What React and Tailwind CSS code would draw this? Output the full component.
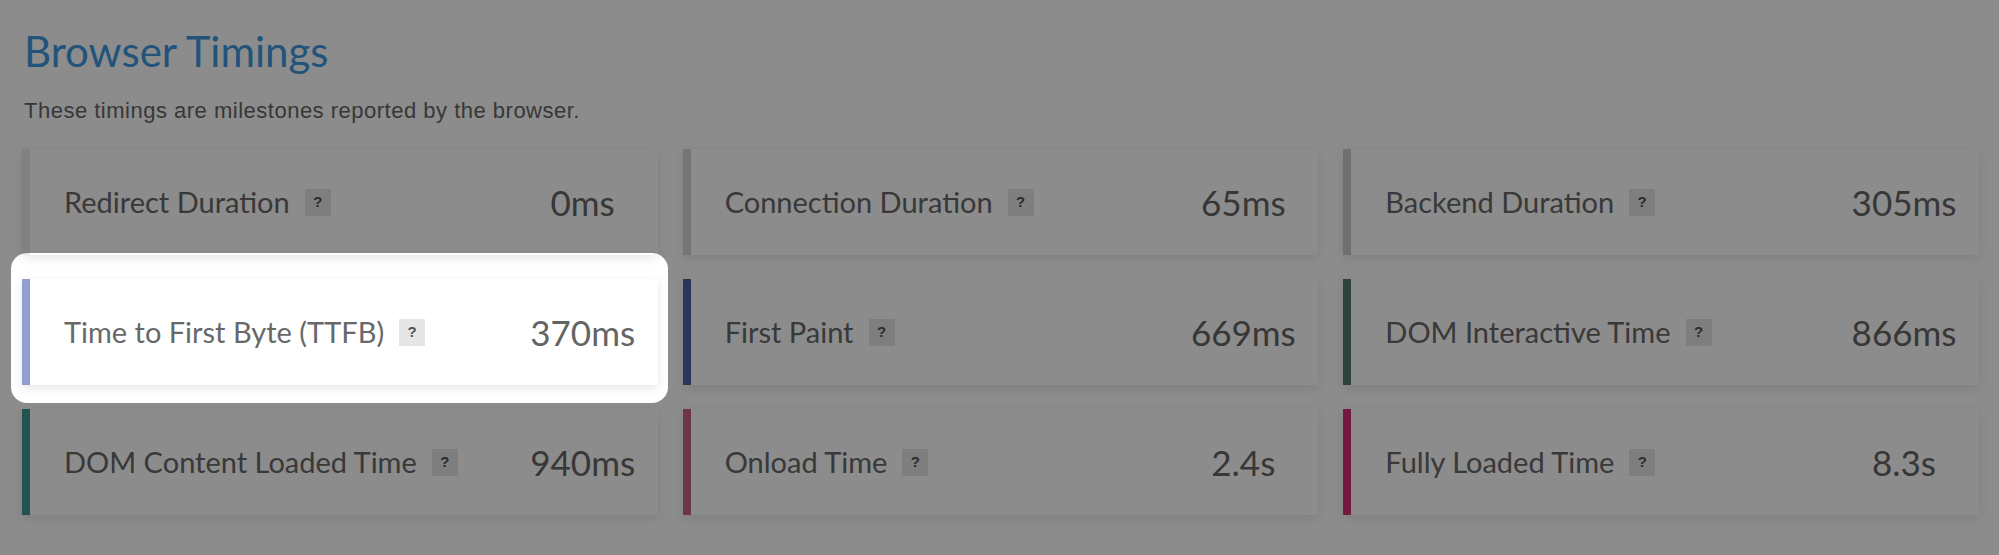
const timings = [
  { label: "Redirect Duration", value: "0ms", bar: "bg-[#ececec]" },
  { label: "Connection Duration", value: "65ms", bar: "bg-[#d6d6d6]" },
  { label: "Backend Duration", value: "305ms", bar: "bg-[#cbcbcb]" },
  { label: "Time to First Byte (TTFB)", value: "370ms", bar: "bg-[#8fa0cf]", focus: true },
  { label: "First Paint", value: "669ms", bar: "bg-[#4b63a3]" },
  { label: "DOM Interactive Time", value: "866ms", bar: "bg-[#52776f]" },
  { label: "DOM Content Loaded Time", value: "940ms", bar: "bg-[#3f9a90]" },
  { label: "Onload Time", value: "2.4s", bar: "bg-[#c8608f]" },
  { label: "Fully Loaded Time", value: "8.3s", bar: "bg-[#d12d76]" },
];

function TimingCard({ label, value, bar, focus }) {
  return (
    <div className="relative flex h-[106px] items-stretch bg-white shadow-[0_3px_10px_rgba(0,0,0,0.10)]">
      <div className={`w-[8px] shrink-0 ${bar}`} />
      <div className="flex flex-1 items-center pl-[34px] text-[29px] text-[#686868]">
        <span>{label}</span>
        <span className="ml-[15px] flex h-[27px] w-[26px] items-center justify-center bg-[#e6e6e6] font-['Liberation_Sans',sans-serif] text-[15px] font-bold text-[#505050]">
          ?
        </span>
      </div>
      <div className="flex w-[150px] shrink-0 items-center justify-center text-[35px] text-[#646464]">
        {value}
      </div>
      {focus && (
        <div className="pointer-events-none absolute -top-[26px] -right-[10px] -bottom-[18px] -left-[11px] z-10 rounded-[16px] shadow-[0_0_0_3000px_rgba(0,0,0,0.45)]" />
      )}
    </div>
  );
}

export default function App() {
  return (
    <div className="min-h-[555px] bg-white pl-[22px] pr-[20px] pt-[30px] font-['Lato',sans-serif]">
      <h1 className="pl-[2px] text-[42px] leading-none text-[#3f98e0]">Browser Timings</h1>
      <p className="mt-[28px] pl-[2px] font-['Liberation_Sans',sans-serif] text-[22px] leading-none tracking-[0.5px] text-[#666]">
        These timings are milestones reported by the browser.
      </p>
      <div className="mt-[27px] grid grid-cols-3 gap-x-[25px] gap-y-[24px]">
        {timings.map((t) => (
          <TimingCard key={t.label} {...t} />
        ))}
      </div>
    </div>
  );
}
